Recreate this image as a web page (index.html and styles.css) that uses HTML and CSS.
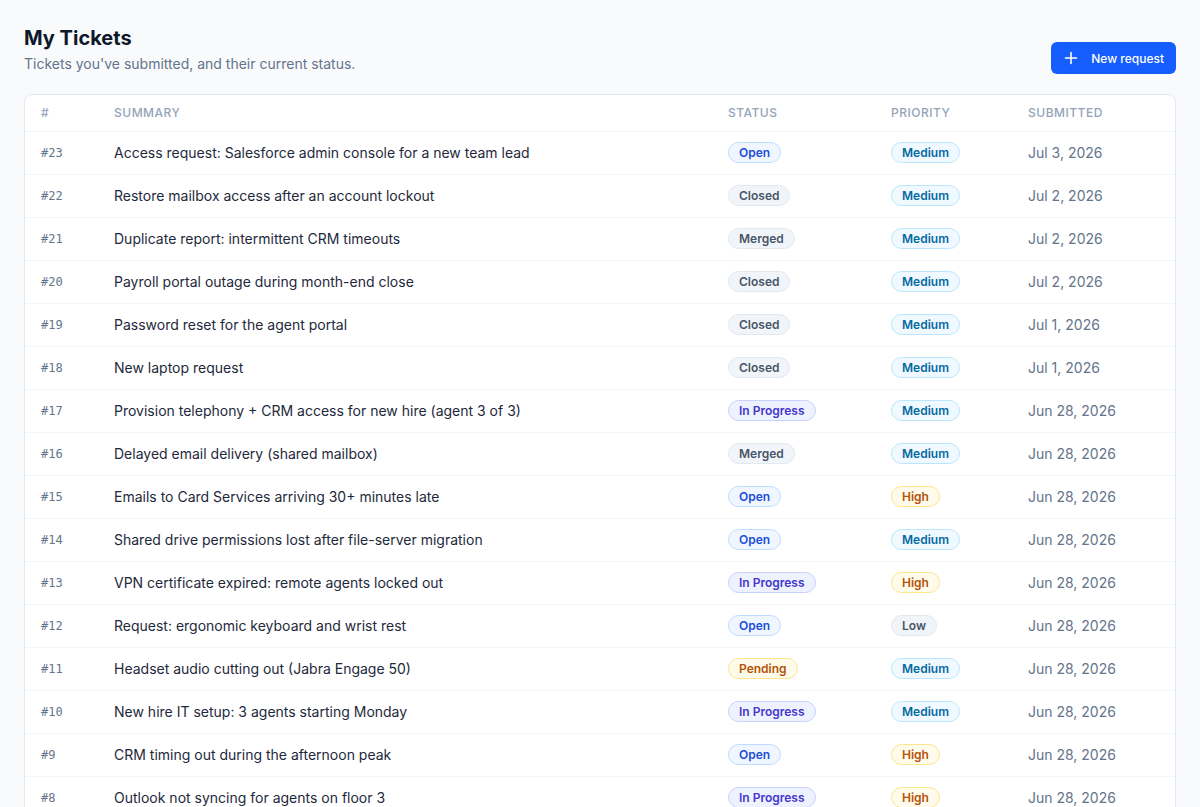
FILE: index.html
```html
<!DOCTYPE html>
<html>
	<head>
		<meta charset="UTF-8">
		<title>My Tickets</title>
		<link rel="stylesheet" href="styles.css">
	</head>
	<body>
		<div id="page">
			<div class="head">
				<div>
					<h1>My Tickets</h1>
					<p class="sub">Tickets you've submitted, and their current status.</p>
				</div>
				<button class="btn">
					<svg width="16" height="16" viewBox="0 0 16 16" fill="none" stroke="currentColor" stroke-width="1.6" stroke-linecap="round"><path d="M8 2.5v11M2.5 8h11"/></svg>
					New request
				</button>
			</div>
			<div class="card">
				<table>
					<thead>
						<tr>
							<th class="c-id">#</th>
							<th class="c-sum">Summary</th>
							<th class="c-st">Status</th>
							<th class="c-pr">Priority</th>
							<th class="c-date">Submitted</th>
						</tr>
					</thead>
					<tbody>
						<tr><td class="id">#23</td><td>Access request: Salesforce admin console for a new team lead</td><td><span class="tag open">Open</span></td><td><span class="tag med">Medium</span></td><td class="date">Jul 3, 2026</td></tr>
						<tr><td class="id">#22</td><td>Restore mailbox access after an account lockout</td><td><span class="tag grey">Closed</span></td><td><span class="tag med">Medium</span></td><td class="date">Jul 2, 2026</td></tr>
						<tr><td class="id">#21</td><td>Duplicate report: intermittent CRM timeouts</td><td><span class="tag grey">Merged</span></td><td><span class="tag med">Medium</span></td><td class="date">Jul 2, 2026</td></tr>
						<tr><td class="id">#20</td><td>Payroll portal outage during month-end close</td><td><span class="tag grey">Closed</span></td><td><span class="tag med">Medium</span></td><td class="date">Jul 2, 2026</td></tr>
						<tr><td class="id">#19</td><td>Password reset for the agent portal</td><td><span class="tag grey">Closed</span></td><td><span class="tag med">Medium</span></td><td class="date">Jul 1, 2026</td></tr>
						<tr><td class="id">#18</td><td>New laptop request</td><td><span class="tag grey">Closed</span></td><td><span class="tag med">Medium</span></td><td class="date">Jul 1, 2026</td></tr>
						<tr><td class="id">#17</td><td>Provision telephony + CRM access for new hire (agent 3 of 3)</td><td><span class="tag prog">In Progress</span></td><td><span class="tag med">Medium</span></td><td class="date">Jun 28, 2026</td></tr>
						<tr><td class="id">#16</td><td>Delayed email delivery (shared mailbox)</td><td><span class="tag grey">Merged</span></td><td><span class="tag med">Medium</span></td><td class="date">Jun 28, 2026</td></tr>
						<tr><td class="id">#15</td><td>Emails to Card Services arriving 30+ minutes late</td><td><span class="tag open">Open</span></td><td><span class="tag amber">High</span></td><td class="date">Jun 28, 2026</td></tr>
						<tr><td class="id">#14</td><td>Shared drive permissions lost after file-server migration</td><td><span class="tag open">Open</span></td><td><span class="tag med">Medium</span></td><td class="date">Jun 28, 2026</td></tr>
						<tr><td class="id">#13</td><td>VPN certificate expired: remote agents locked out</td><td><span class="tag prog">In Progress</span></td><td><span class="tag amber">High</span></td><td class="date">Jun 28, 2026</td></tr>
						<tr><td class="id">#12</td><td>Request: ergonomic keyboard and wrist rest</td><td><span class="tag open">Open</span></td><td><span class="tag grey">Low</span></td><td class="date">Jun 28, 2026</td></tr>
						<tr><td class="id">#11</td><td>Headset audio cutting out (Jabra Engage 50)</td><td><span class="tag amber">Pending</span></td><td><span class="tag med">Medium</span></td><td class="date">Jun 28, 2026</td></tr>
						<tr><td class="id">#10</td><td>New hire IT setup: 3 agents starting Monday</td><td><span class="tag prog">In Progress</span></td><td><span class="tag med">Medium</span></td><td class="date">Jun 28, 2026</td></tr>
						<tr><td class="id">#9</td><td>CRM timing out during the afternoon peak</td><td><span class="tag open">Open</span></td><td><span class="tag amber">High</span></td><td class="date">Jun 28, 2026</td></tr>
						<tr><td class="id">#8</td><td>Outlook not syncing for agents on floor 3</td><td><span class="tag prog">In Progress</span></td><td><span class="tag amber">High</span></td><td class="date">Jun 28, 2026</td></tr>
					</tbody>
				</table>
			</div>
		</div>
	</body>
</html>
```

FILE: styles.css
```css
*{
	margin: 0;
	padding: 0;
	box-sizing: border-box;
}
body{
	background: #f8fafc;
	font-family: Inter, "Noto Sans", sans-serif;
	color: #1e293b;
}
#page{
	padding: 24px;
}
.head{
	display: flex;
	justify-content: space-between;
	align-items: flex-end;
	margin-bottom: 20px;
}
.head h1{
	font-size: 20px;
	line-height: 28px;
	font-weight: 700;
	color: #0f172a;
}
.head .sub{
	margin-top: 2px;
	font-size: 14px;
	line-height: 20px;
	color: #64748b;
}
.btn{
	display: flex;
	align-items: center;
	gap: 12px;
	height: 32px;
	padding: 0 12px 0 12px;
	border: 0;
	border-radius: 6px;
	background: #155dfc;
	color: white;
	font-family: inherit;
	font-size: 12px;
	font-weight: 500;
	cursor: pointer;
}
.card{
	background: white;
	border: 1px solid #e2e8f0;
	border-radius: 8px;
	overflow: hidden;
}
table{
	width: 100%;
	border-collapse: collapse;
	table-layout: fixed;
}
th{
	height: 36px;
	padding-left: 16px;
	text-align: left;
	font-size: 12px;
	font-weight: 500;
	letter-spacing: 0.5px;
	text-transform: uppercase;
	color: #94a3b8;
	border-bottom: 1px solid #f1f5f9;
}
.c-id{ width: 73px; }
.c-st{ width: 163px; }
.c-pr{ width: 137px; }
.c-date{ width: 163px; }
td{
	height: 43px;
	padding-left: 16px;
	font-size: 14px;
	color: #1e293b;
	border-bottom: 1px solid #f1f5f9;
	white-space: nowrap;
}
td.id{
	font-family: "DejaVu Sans Mono", monospace;
	font-size: 12px;
	color: #64748b;
}
td.date{
	color: #64748b;
}
.tag{
	display: inline-block;
	height: 21px;
	line-height: 19px;
	padding: 0 10px;
	border: 1px solid;
	border-radius: 999px;
	font-size: 12px;
	font-weight: 600;
}
.open{
	background: #eff6ff;
	border-color: #bfdbfe;
	color: #1d4ed8;
}
.grey{
	background: #f1f5f9;
	border-color: #e2e8f0;
	color: #475569;
}
.prog{
	background: #eef2ff;
	border-color: #c7d2fe;
	color: #4338ca;
}
.amber{
	background: #fffbeb;
	border-color: #fde68a;
	color: #b45309;
}
.med{
	background: #f0f9ff;
	border-color: #bae6fd;
	color: #0369a1;
}
```
